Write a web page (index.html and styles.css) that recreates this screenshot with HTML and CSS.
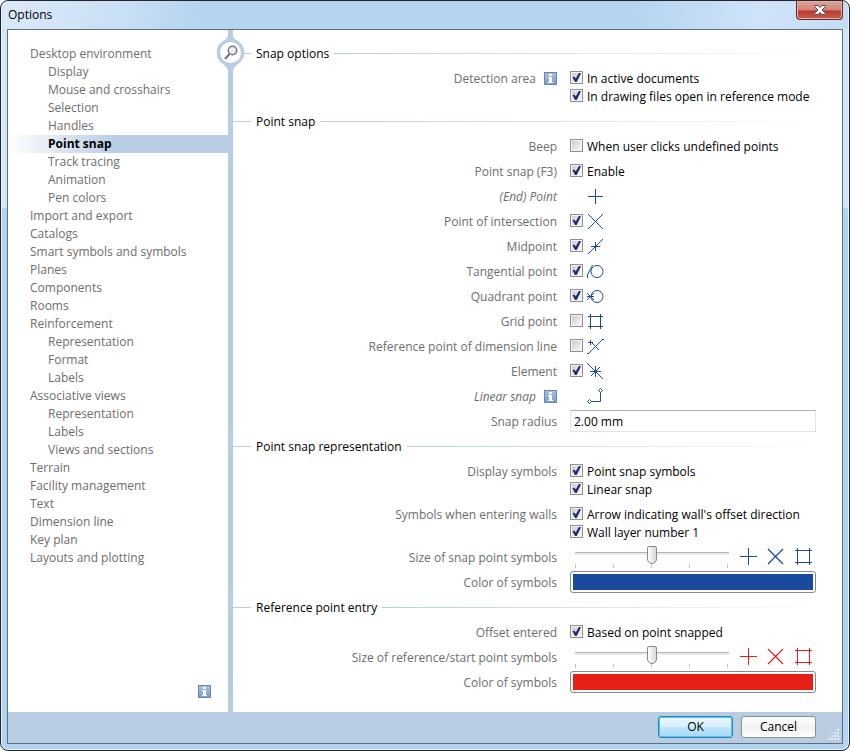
FILE: index.html
```html
<!DOCTYPE html>
<html lang="en">

<head>
    <meta charset="UTF-8">
    <meta name="viewport" content="width=device-width, initial-scale=1.0">
    <title>Options</title>
    <link rel="stylesheet" href="styles.css">
</head>

<body>
    <!-- shared symbols -->
    <svg class="defs" width="0" height="0">
        <defs>
            <linearGradient id="info-fill" x1="0" y1="0" x2="0" y2="1">
                <stop offset="0" stop-color="#a9c1df"></stop>
                <stop offset="1" stop-color="#7f9dc6"></stop>
            </linearGradient>
            <symbol id="info" viewBox="0 0 13 13">
                <rect x="0.5" y="0.5" width="12" height="12" fill="url(#info-fill)" stroke="#6487b5"></rect>
                <path d="M5 2h3v2H5zM4 5h4v5h1v1H4v-1h1V6H4z" fill="#fff"></path>
            </symbol>
            <symbol id="plus" viewBox="0 0 18 18">
                <path d="M1 8.5h17M9.5 0v17"></path>
            </symbol>
            <symbol id="cross" viewBox="0 0 18 18">
                <path d="M1 1l15 15M16 1l-15 15" stroke-width="1.3"></path>
            </symbol>
            <symbol id="grid" viewBox="0 0 18 18">
                <path d="M0 2.5h17M0 14.5h17M2.5 0v17M14.5 0v17"></path>
            </symbol>
        </defs>
    </svg>

    <div class="window">
        <header class="titlebar">
            <h1>Options</h1>
            <button class="close" type="button" aria-label="Close">
                <svg width="12" height="10" viewBox="0 0 12 10">
                    <path d="M0.5 0.5h3.5l2 2 2-2h3.5v1l-3.5 3.5 3.5 3.5v1h-3.5l-2-2-2 2h-3.5v-1l3.5-3.5-3.5-3.5z" fill="#fff" stroke="#5c4a55"></path>
                </svg>
            </button>
        </header>

        <div class="client">
            <div class="panes">
                <nav class="sidebar">
                    <ul>
                        <li><a href="#">Desktop environment</a></li>
                        <li class="sub"><a href="#">Display</a></li>
                        <li class="sub"><a href="#">Mouse and crosshairs</a></li>
                        <li class="sub"><a href="#">Selection</a></li>
                        <li class="sub"><a href="#">Handles</a></li>
                        <li class="sub active"><a href="#">Point snap</a></li>
                        <li class="sub"><a href="#">Track tracing</a></li>
                        <li class="sub"><a href="#">Animation</a></li>
                        <li class="sub"><a href="#">Pen colors</a></li>
                        <li><a href="#">Import and export</a></li>
                        <li><a href="#">Catalogs</a></li>
                        <li><a href="#">Smart symbols and symbols</a></li>
                        <li><a href="#">Planes</a></li>
                        <li><a href="#">Components</a></li>
                        <li><a href="#">Rooms</a></li>
                        <li><a href="#">Reinforcement</a></li>
                        <li class="sub"><a href="#">Representation</a></li>
                        <li class="sub"><a href="#">Format</a></li>
                        <li class="sub"><a href="#">Labels</a></li>
                        <li><a href="#">Associative views</a></li>
                        <li class="sub"><a href="#">Representation</a></li>
                        <li class="sub"><a href="#">Labels</a></li>
                        <li class="sub"><a href="#">Views and sections</a></li>
                        <li><a href="#">Terrain</a></li>
                        <li><a href="#">Facility management</a></li>
                        <li><a href="#">Text</a></li>
                        <li><a href="#">Dimension line</a></li>
                        <li><a href="#">Key plan</a></li>
                        <li><a href="#">Layouts and plotting</a></li>
                    </ul>
                    <button class="info-btn" type="button" aria-label="Information">
                        <svg width="13" height="13"><use href="#info"></use></svg>
                    </button>
                </nav>

                <div class="divider">
                    <button class="search" type="button" aria-label="Search">
                        <svg width="28" height="40" viewBox="0 0 28 40">
                            <path d="M11 0h5v3q1 3 5 5a13.500 13.500 0 0 1 0 23q-4 3-5 6v3h-5v-3q-1-3-5-6a13.500 13.500 0 0 1 0-23q4-2 5-5z" fill="#b8cce2"></path>
                            <circle cx="13.500" cy="19.500" r="10.500" fill="#fff"></circle>
                            <circle cx="15.500" cy="17.500" r="4.200" fill="#eef0f2" stroke="#777" stroke-width="1.500"></circle>
                            <path d="M12.500 21l-4.500 5" stroke="#777" stroke-width="2.200"></path>
                        </svg>
                    </button>
                </div>

                <form class="content">
                    <section>
                        <h2>Snap options</h2>
                        <div class="row">
                            <span class="label">Detection area
                                <svg width="13" height="13"><use href="#info"></use></svg>
                            </span>
                            <div class="field">
                                <label><input type="checkbox" checked>In active documents</label>
                                <label><input type="checkbox" checked>In drawing files open in reference mode</label>
                            </div>
                        </div>
                    </section>

                    <section>
                        <h2>Point snap</h2>
                        <div class="row">
                            <span class="label">Beep</span>
                            <div class="field">
                                <label><input type="checkbox">When user clicks undefined points</label>
                            </div>
                        </div>
                        <div class="row">
                            <span class="label">Point snap (F3)</span>
                            <div class="field">
                                <label><input type="checkbox" checked>Enable</label>
                            </div>
                        </div>
                        <div class="row">
                            <span class="label fixed">(End) Point</span>
                            <div class="field symbol no-check">
                                <svg class="snap" width="18" height="18"><path d="M1 8.500h15M8.500 1v15"></path></svg>
                            </div>
                        </div>
                        <div class="row">
                            <label class="label" for="intersection">Point of intersection</label>
                            <div class="field symbol">
                                <input type="checkbox" id="intersection" checked>
                                <svg class="snap" width="18" height="18"><path d="M1 1l15 15M16 1l-15 15"></path></svg>
                            </div>
                        </div>
                        <div class="row">
                            <label class="label" for="midpoint">Midpoint</label>
                            <div class="field symbol">
                                <input type="checkbox" id="midpoint" checked>
                                <svg class="snap" width="18" height="18"><path d="M1 16l15-15M4 8.500h9M8.500 4v9"></path></svg>
                            </div>
                        </div>
                        <div class="row">
                            <label class="label" for="tangential">Tangential point</label>
                            <div class="field symbol">
                                <input type="checkbox" id="tangential" checked>
                                <svg class="snap" width="18" height="18"><circle cx="10" cy="8.500" r="6"></circle><path d="M0.500 15v-3l5-10"></path></svg>
                            </div>
                        </div>
                        <div class="row">
                            <label class="label" for="quadrant">Quadrant point</label>
                            <div class="field symbol">
                                <input type="checkbox" id="quadrant" checked>
                                <svg class="snap" width="18" height="18"><circle cx="10" cy="8.500" r="6"></circle><path d="M0 5l7 7M7 5l-7 7M0 8.500h7"></path></svg>
                            </div>
                        </div>
                        <div class="row">
                            <label class="label" for="gridpoint">Grid point</label>
                            <div class="field symbol">
                                <input type="checkbox" id="gridpoint">
                                <svg class="snap" width="18" height="18"><path d="M1 3.500h15M1 13.500h15M3.500 1v15M13.500 1v15"></path></svg>
                            </div>
                        </div>
                        <div class="row">
                            <label class="label" for="refpoint">Reference point of dimension line</label>
                            <div class="field symbol">
                                <input type="checkbox" id="refpoint">
                                <svg class="snap" width="18" height="18"><path d="M1 16l15-15M5 5l7 7M1 4.500h5M3.500 2v5M0 15.500h2M15 1.500h2"></path></svg>
                            </div>
                        </div>
                        <div class="row">
                            <label class="label" for="element">Element</label>
                            <div class="field symbol">
                                <input type="checkbox" id="element" checked>
                                <svg class="snap" width="18" height="18"><path d="M0 0l16 16M4 13l9-9M3 8.500h11M8.500 3v11"></path></svg>
                            </div>
                        </div>
                        <div class="row">
                            <span class="label"><em>Linear snap</em>
                                <svg width="13" height="13"><use href="#info"></use></svg>
                            </span>
                            <div class="field symbol no-check">
                                <svg class="snap" width="18" height="18"><path d="M4 13.500h9.500v-9M0.500 13.500l2-2 2 2-2 2zM11.500 2.500l2-2 2 2-2 2z"></path></svg>
                            </div>
                        </div>
                        <div class="row">
                            <label class="label" for="radius">Snap radius</label>
                            <div class="field wide">
                                <input type="text" id="radius" value="2.00 mm">
                            </div>
                        </div>
                    </section>

                    <section>
                        <h2>Point snap representation</h2>
                        <div class="row">
                            <span class="label">Display symbols</span>
                            <div class="field">
                                <label><input type="checkbox" checked>Point snap symbols</label>
                                <label><input type="checkbox" checked>Linear snap</label>
                            </div>
                        </div>
                        <div class="row">
                            <span class="label">Symbols when entering walls</span>
                            <div class="field">
                                <label><input type="checkbox" checked>Arrow indicating wall's offset direction</label>
                                <label><input type="checkbox" checked>Wall layer number 1</label>
                            </div>
                        </div>
                        <div class="row">
                            <label class="label" for="snap-size">Size of snap point symbols</label>
                            <div class="field wide size">
                                <div class="slider"><input type="range" id="snap-size" min="0" max="4" value="2"></div>
                                <div class="preview">
                                    <svg width="18" height="18"><use href="#plus"></use></svg>
                                    <svg width="18" height="18"><use href="#cross"></use></svg>
                                    <svg width="18" height="18"><use href="#grid"></use></svg>
                                </div>
                            </div>
                        </div>
                        <div class="row">
                            <label class="label" for="snap-color">Color of symbols</label>
                            <div class="field wide">
                                <input type="color" id="snap-color" value="#1a4a9e">
                            </div>
                        </div>
                    </section>

                    <section>
                        <h2>Reference point entry</h2>
                        <div class="row">
                            <span class="label">Offset entered</span>
                            <div class="field">
                                <label><input type="checkbox" checked>Based on point snapped</label>
                            </div>
                        </div>
                        <div class="row">
                            <label class="label" for="ref-size">Size of reference/start point symbols</label>
                            <div class="field wide size">
                                <div class="slider"><input type="range" id="ref-size" min="0" max="4" value="2"></div>
                                <div class="preview red">
                                    <svg width="18" height="18"><use href="#plus"></use></svg>
                                    <svg width="18" height="18"><use href="#cross"></use></svg>
                                    <svg width="18" height="18"><use href="#grid"></use></svg>
                                </div>
                            </div>
                        </div>
                        <div class="row">
                            <label class="label" for="ref-color">Color of symbols</label>
                            <div class="field wide">
                                <input type="color" id="ref-color" value="#e62017">
                            </div>
                        </div>
                    </section>
                </form>
            </div>

            <footer class="buttons">
                <button class="btn default" type="button">OK</button>
                <button class="btn" type="button">Cancel</button>
                <svg class="grip" width="12" height="12" viewBox="0 0 12 12">
                    <path d="M9 0h2v2h-2zM6 3h2v2h-2zM9 3h2v2h-2zM3 6h2v2h-2zM6 6h2v2h-2zM9 6h2v2h-2zM0 9h2v2h-2zM3 9h2v2h-2zM6 9h2v2h-2zM9 9h2v2h-2z" fill="#e4edf6"></path>
                </svg>
            </footer>
        </div>
    </div>
</body>

</html>
```
FILE: styles.css
```css
* {
    box-sizing: border-box;
    margin: 0;
    padding: 0;
}

body {
    font: 12px/18px "Open Sans", "Noto Sans", sans-serif;
    color: #000;
    background: #fff;
}

button,
input {
    font: inherit;
    color: inherit;
}

svg {
    display: block;
    flex: none;
}

.defs {
    position: absolute;
}

/* window frame */
.window {
    display: flex;
    flex-direction: column;
    min-height: 100vh;
    padding: 0 6px 6px;
    border: 1px solid #22252e;
    border-radius: 8px;
    background: linear-gradient(#d3e5f8 0, #d3e5f8 206px, #b3d4f0 208px);
    box-shadow: inset 0 0 0 1px #e6f2fc;
}

.titlebar {
    display: flex;
    justify-content: space-between;
    height: 28px;
    margin: 0 -5px;
    border-radius: 7px 7px 0 0;
    background: linear-gradient(100deg, #dbe9f9 0, #c9dff5 120px, #b4d4ef 200px, #b4d4ef 620px, #cfe3f8 750px, #c6dcf4 100%);
}

.titlebar h1 {
    padding: 5px 6px;
    font-size: 12px;
    font-weight: normal;
}

.close {
    display: flex;
    align-items: center;
    justify-content: center;
    width: 47px;
    height: 19px;
    margin-right: 5px;
    border: 1px solid #6d2a2a;
    border-top: 0;
    border-radius: 0 0 4px 4px;
    background: linear-gradient(#e0a498 0, #d08377 9px, #b8392b 10px, #c8604f 100%);
    box-shadow: inset 0 0 0 1px #e2b0a8;
}

.client {
    display: flex;
    flex: 1;
    flex-direction: column;
    border: 1px solid #5b707e;
    background: #fff;
}

.panes {
    display: flex;
    flex: 1;
}

/* left tree */
.sidebar {
    display: flex;
    flex: none;
    flex-direction: column;
    justify-content: space-between;
    width: 220px;
    padding: 15px 0 14px;
}

.sidebar ul {
    list-style: none;
}

.sidebar li {
    padding-left: 22px;
}

.sidebar .sub {
    padding-left: 40px;
}

.sidebar a {
    display: block;
    color: #6d6d6d;
    text-decoration: none;
}

.sidebar .active {
    background: linear-gradient(90deg, #fff 0, #b8cce2 110px);
}

.sidebar .active a {
    color: #000;
    font-weight: bold;
}

.info-btn {
    align-self: flex-end;
    margin-right: 17px;
    border: 0;
    background: none;
}

.divider {
    position: relative;
    flex: none;
    width: 5px;
    background: #b8cce2;
}

.search {
    position: absolute;
    top: 3px;
    left: -11px;
    border: 0;
    background: none;
}

/* settings */
.content {
    flex: 1;
    padding: 11px 26px 17px 0;
}

.content h2 {
    display: flex;
    align-items: center;
    height: 25px;
    margin-right: -10px;
    font-size: 12px;
    font-weight: normal;
}

.content h2::before,
.content h2::after {
    content: "";
    height: 1px;
    background: #b8cce2;
}

.content h2::before {
    width: 18px;
    margin-right: 5px;
}

.content h2::after {
    flex: 1;
    margin-left: 5px;
    background: linear-gradient(90deg, #b8cce2, #fff);
}

.row {
    display: grid;
    grid-template-columns: 324px 1fr;
    gap: 13px;
    min-height: 25px;
}

.label {
    display: flex;
    align-items: center;
    justify-content: flex-end;
    gap: 8px;
    height: 25px;
    color: #6d6d6d;
}

.label em,
.label.fixed {
    font-style: italic;
}

.field {
    padding: 4px 0 3px;
}

.field label {
    display: flex;
    align-items: center;
    gap: 4px;
}

.field.symbol {
    display: flex;
    align-items: center;
    gap: 4px;
}

.field.no-check {
    padding-left: 17px;
}

.field.wide {
    padding: 1px 0 2px;
}

input[type="checkbox"] {
    flex: none;
    width: 13px;
    height: 13px;
    margin-bottom: 3px;
    padding: 1px;
    appearance: none;
    border: 1px solid #8e8f8f;
    background: linear-gradient(135deg, #cbcfd5, #f6f6f6) content-box, #f4f4f4;
}

input[type="checkbox"]:checked::before {
    content: "";
    display: block;
    width: 9px;
    height: 9px;
    background: #212a6b;
    clip-path: polygon(6% 48%, 26% 40%, 42% 62%, 76% 0, 100% 4%, 52% 100%, 34% 100%);
}

.snap,
.preview svg {
    fill: none;
    stroke: #1a4a9e;
}

input[type="text"] {
    display: block;
    width: 100%;
    height: 22px;
    padding: 0 3px;
    border: 1px solid #e2e3ea;
    border-top-color: #abadb3;
    background: #fff;
}

.size {
    display: flex;
    align-items: center;
    justify-content: space-between;
}

/* tick marks sit under the track */
.slider {
    width: 154px;
    height: 22px;
    margin-left: 5px;
    background: repeating-linear-gradient(90deg, #c4c4c4 0, #c4c4c4 1px, transparent 1px, transparent 38px) 0 100% / 100% 4px no-repeat;
}

.slider input {
    display: block;
    width: 100%;
    height: 18px;
    appearance: none;
    background: linear-gradient(#b4b4b4 0, #b4b4b4 1px, #e7eaea 1px) 0 6px / 100% 3px no-repeat;
}

.slider input::-webkit-slider-thumb {
    width: 10px;
    height: 18px;
    appearance: none;
    background: linear-gradient(90deg, #fff, #d8d8d8) #eee;
    border: 1px solid #888;
    border-radius: 2px 2px 5px 5px;
}

.preview {
    display: flex;
    gap: 10px;
    padding-right: 3px;
}

.preview.red svg {
    stroke: #e62017;
}

input[type="color"] {
    display: block;
    width: 100%;
    height: 22px;
    padding: 2px;
    appearance: none;
    border: 1px solid #8a8a8a;
    border-radius: 3px;
    background: #fff;
}

input[type="color"]::-webkit-color-swatch-wrapper {
    padding: 0;
}

input[type="color"]::-webkit-color-swatch {
    border: 0;
}

/* bottom bar */
.buttons {
    display: flex;
    justify-content: flex-end;
    gap: 8px;
    height: 31px;
    padding: 4px 2px 0 0;
    background: #b8cce2;
}

.btn {
    width: 75px;
    height: 22px;
    border: 1px solid #8a8f96;
    border-radius: 3px;
    background: linear-gradient(#fff, #f1f1f1 50%, #fff);
}

.btn.default {
    border-color: #3c7fb1;
    background: linear-gradient(#e9f6fd 0, #d9f0fc 50%, #bee6fd 50%, #a7d9f5 100%);
    box-shadow: inset 0 0 0 1px #48c8f4;
}

.grip {
    align-self: flex-end;
    margin: 0 0 2px 4px;
}
```
